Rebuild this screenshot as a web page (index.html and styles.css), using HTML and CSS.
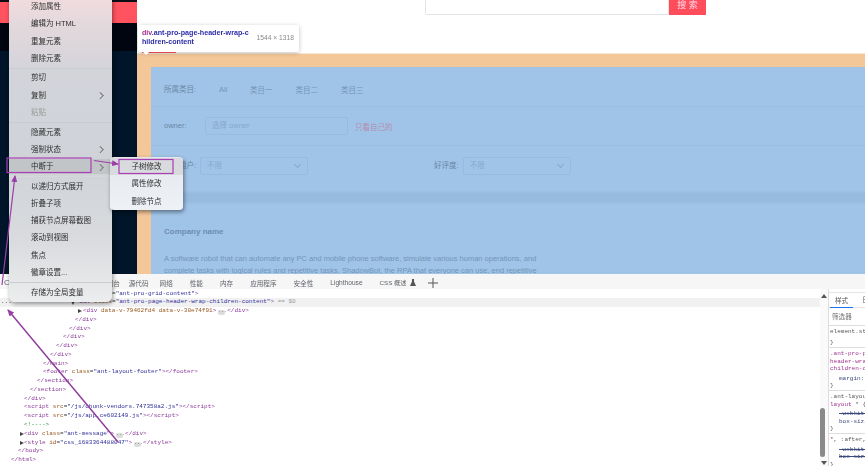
FILE: index.html
```html
<!DOCTYPE html>
<html lang="zh-CN">
<head>
    <meta charset="UTF-8">
    <meta name="viewport" content="width=device-width, initial-scale=1.0">
    <title>DevTools</title>
    <link rel="stylesheet" href="styles.css">
</head>
<body>

<div class="page">
    <aside class="sidebar">
        <div class="side-top"></div>
        <div class="side-red"></div>
        <div class="side-black"></div>
    </aside>

    <main class="content">
        <div class="topbar">
            <div class="search-input"></div>
            <div class="search-btn">搜 索</div>
        </div>
        <div class="margin-top"></div>
        <div class="margin-row">
            <div class="margin-left"></div>
            <div class="blue">
                <div class="filter-row row-cat">
                    <span class="flabel">所属类目:</span>
                    <span class="cat cat-all">All</span>
                    <span class="cat">类目一</span>
                    <span class="cat">类目二</span>
                    <span class="cat">类目三</span>
                </div>
                <div class="filter-row row-owner">
                    <span class="flabel">owner:</span>
                    <div class="finput">选择 owner</div>
                    <span class="only-me">只看自己的</span>
                </div>
                <div class="filter-row row-select">
                    <span class="flabel lab-user">活跃用户:</span>
                    <div class="fselect">不限<span class="chev"></span></div>
                    <span class="flabel lab-good">好评度:</span>
                    <div class="fselect">不限<span class="chev"></span></div>
                </div>
                <div class="band"></div>
                <h3 class="company">Company name</h3>
                <p class="about">A software robot that can automate any PC and mobile phone software, simulate various human operations, and complete tasks with logical rules and repetitive tasks. ShadowBot, the RPA that everyone can use, end repetitive</p>
            </div>
        </div>
    </main>
</div>

<section class="devtools">
    <div class="tabs">
        <span class="tab-first">C</span>
        <span class="tab tab-console">控制台</span>
        <span class="tab tab-src">源代码</span>
        <span class="tab">网络</span>
        <span class="tab">性能</span>
        <span class="tab">内存</span>
        <span class="tab">应用程序</span>
        <span class="tab">安全性</span>
        <span class="tab">Lighthouse</span>
        <span class="tab tab-css">CSS 概述 <svg class="flask" width="6" height="7" viewBox="0 0 6 7"><path d="M2 0h2v2.5L6 7H0l2-4.5z" fill="#555"/></svg></span>
        <svg class="tab-plus" width="10" height="10" viewBox="0 0 10 10"><path d="M5 0v10M0 5h10" stroke="#555" stroke-width="1" fill="none"/></svg>
    </div>
    <div class="dt-body">
        <div class="tree">
            <div class="ln l15"><span class="tg">&lt;div</span> <span class="at">class</span>=<span class="vl">"ant-pro-grid-content"</span><span class="tg">&gt;</span></div>
            <div class="ln l15 selected"><span class="dots">...</span><span class="tri-down"></span><span class="tg">&lt;div</span> <span class="at">class</span>=<span class="vl">"ant-pro-page-header-wrap-children-content"</span><span class="tg">&gt;</span> <span class="eq">== $0</span></div>
            <div class="ln l10"><span class="tri"></span><span class="tg">&lt;div</span> <span class="at">data-v-79462fd4 data-v-30e74f91</span><span class="tg">&gt;</span><span class="more">...</span><span class="tg">&lt;/div&gt;</span></div>
            <div class="ln l10 tg">&lt;/div&gt;</div>
            <div class="ln l9 tg">&lt;/div&gt;</div>
            <div class="ln l8 tg">&lt;/div&gt;</div>
            <div class="ln l7 tg">&lt;/div&gt;</div>
            <div class="ln l6 tg">&lt;/div&gt;</div>
            <div class="ln l5 tg">&lt;/main&gt;</div>
            <div class="ln l5"><span class="tg">&lt;footer</span> <span class="at">class</span>=<span class="vl">"ant-layout-footer"</span><span class="tg">&gt;&lt;/footer&gt;</span></div>
            <div class="ln l4 tg">&lt;/section&gt;</div>
            <div class="ln l3 tg">&lt;/section&gt;</div>
            <div class="ln l2 tg">&lt;/div&gt;</div>
            <div class="ln l2"><span class="tg">&lt;script</span> <span class="at">src</span>=<span class="vl">"/js/chunk-vendors.747358a2.js"</span><span class="tg">&gt;&lt;/script&gt;</span></div>
            <div class="ln l2"><span class="tg">&lt;script</span> <span class="at">src</span>=<span class="vl">"/js/app.ce602149.js"</span><span class="tg">&gt;&lt;/script&gt;</span></div>
            <div class="ln l2 cm">&lt;!----&gt;</div>
            <div class="ln l2"><span class="tri"></span><span class="tg">&lt;div</span> <span class="at">class</span>=<span class="vl">"ant-message"</span><span class="tg">&gt;</span><span class="more">...</span><span class="tg">&lt;/div&gt;</span></div>
            <div class="ln l2"><span class="tri"></span><span class="tg">&lt;style</span> <span class="at">id</span>=<span class="vl">"css_1683364488047"</span><span class="tg">&gt;</span><span class="more">...</span><span class="tg">&lt;/style&gt;</span></div>
            <div class="ln l1 tg">&lt;/body&gt;</div>
            <div class="ln l0 tg">&lt;/html&gt;</div>
        </div>
        <div class="scroll">
            <span class="sc-up"></span>
            <span class="sc-thumb"></span>
            <span class="sc-down"></span>
        </div>
        <div class="styles">
            <div class="st-tabs"><span class="st-active">样式</span><span class="st-next">日</span></div>
            <div class="st-filter">筛选器</div>
            <div class="rule"><div>element.style {</div><div class="end-gap">}</div></div>
            <div class="rule"><div class="sel">.ant-pro-page-</div><div class="sel">header-wrap-</div><div class="sel">children-content {</div><div class="prop first">margin: 0;</div><div>}</div></div>
            <div class="rule"><div>.ant-layout-</div><div><span class="sel">layout</span> * {</div><div class="prop first strike">-webkit-box</div><div class="prop">box-sizing:</div><div>}</div></div>
            <div class="rule"><div><span class="sel">*</span>, :after, :be</div><div class="prop first strike">-webkit-box</div><div class="prop strike">box-sizing:</div><div>}</div></div>
        </div>
    </div>
</section>

<!-- floating stuff on top of the page -->
<div class="tooltip">
    <div class="tip-name"><span class="tip-tag">div</span>.ant-pro-page-header-wrap-c<br>hildren-content</div>
    <div class="tip-size">1544 × 1318</div>
</div>

<div class="menu">
    <div class="mi">添加属性</div>
    <div class="mi">编辑为 HTML</div>
    <div class="mi">重复元素</div>
    <div class="mi">删除元素</div>
    <div class="sep"></div>
    <div class="mi">剪切</div>
    <div class="mi has-sub">复制</div>
    <div class="mi off">粘贴</div>
    <div class="sep"></div>
    <div class="mi">隐藏元素</div>
    <div class="mi has-sub">强制状态</div>
    <div class="mi has-sub hover">中断于</div>
    <div class="sep sep-faint"></div>
    <div class="mi">以递归方式展开</div>
    <div class="mi">折叠子项</div>
    <div class="mi">捕获节点屏幕截图</div>
    <div class="mi">滚动到视图</div>
    <div class="mi">焦点</div>
    <div class="mi">徽章设置...</div>
    <div class="sep"></div>
    <div class="mi">存储为全局变量</div>
</div>

<div class="submenu">
    <div class="si hover">子树修改</div>
    <div class="si">属性修改</div>
    <div class="si">删除节点</div>
</div>

<svg class="marks" width="865" height="466" viewBox="0 0 865 466">
    <defs>
        <marker id="head" markerWidth="7" markerHeight="6" refX="6" refY="3" orient="auto" markerUnits="userSpaceOnUse">
            <path d="M0 0L7 3L0 6z" fill="#9a3fa6"/>
        </marker>
    </defs>
    <rect x="7" y="158" width="84" height="14.5" fill="none" stroke="#a83fb5" stroke-width="1.2"/>
    <rect x="119" y="159.5" width="54" height="14" fill="none" stroke="#a83fb5" stroke-width="1.2"/>
    <line x1="94" y1="160.5" x2="118" y2="164" stroke="#9a3fa6" stroke-width="1.2" marker-end="url(#head)"/>
    <line x1="2" y1="285" x2="15" y2="176" stroke="#9a3fa6" stroke-width="1.2" marker-end="url(#head)"/>
    <line x1="118" y1="442" x2="8" y2="310" stroke="#8d3a9c" stroke-width="1.4" marker-end="url(#head)"/>
</svg>

</body>
</html>
```

FILE: styles.css
```css
/* General */
html, body {
    margin: 0;
    padding: 0;
}
body {
    width: 865px;
    height: 466px;
    overflow: hidden;
    position: relative;
    background: #fff;
    font-family: "Liberation Sans", "Noto Sans CJK SC", sans-serif;
    color: #333;
    filter: blur(0.45px);
}

/* Page under inspection */
.page {
    display: flex;
    height: 274px;
}
.sidebar {
    width: 137px;
    background: #001529;
    flex-shrink: 0;
}
.side-top {
    height: 2px;
    background: #0a0d14;
}
.side-red {
    height: 21px;
    background: #ff535f;
}
.side-black {
    height: 28px;
    background: #00050f;
}
.content {
    flex: 1;
    display: flex;
    flex-direction: column;
    min-width: 0;
}
.topbar {
    height: 53px;
    display: flex;
    align-items: flex-start;
    padding-left: 288px;
    border-bottom: 1px solid #f7e6d4;
    position: relative;
}
/* active tab ink, mostly hidden by the tooltip */
.topbar::before {
    content: "";
    position: absolute;
    left: 5px;
    bottom: 0;
    width: 34px;
    height: 1.5px;
    background: #ff535f;
}
.search-input {
    width: 242px;
    height: 14px;
    background: #fff;
    border: 1px solid #e4e4e4;
    border-top: none;
    border-radius: 0 0 2px 2px;
}
.search-btn {
    width: 37px;
    height: 15px;
    background: #ff4d5b;
    color: #fde;
    font-size: 9px;
    line-height: 10px;
    text-align: center;
}
.margin-top {
    height: 13px;
    background: #f4c799;
}
.margin-row {
    flex: 1;
    display: flex;
    min-height: 0;
}
.margin-left {
    width: 14px;
    background: #f4c799;
}
.blue {
    flex: 1;
    background: #a0c4e8;
    overflow: hidden;
    color: #6d8fb0;
    font-size: 7.5px;
}
.filter-row {
    display: flex;
    align-items: center;
    padding-left: 13px;
    border-bottom: 1px dotted #94b8dc;
}
.row-cat {
    height: 39px;
}
.row-owner {
    height: 38px;
}
.row-select {
    height: 38px;
    border-bottom: none;
    padding-top: 1px;
}
.flabel {
    color: #6a87a6;
}
.row-cat .flabel {
    width: 55px;
    margin-top: 3px;
}
.row-owner .flabel {
    width: 41px;
    margin-top: -1px;
}
.cat {
    margin-right: 23px;
    margin-top: 6px;
    color: #7494b4;
}
.cat-all {
    width: 8px;
    white-space: nowrap;
}
.finput, .fselect {
    height: 16px;
    line-height: 16px;
    border: 1px solid #97bbdf;
    border-radius: 2px;
    box-sizing: content-box;
    padding-left: 6px;
    color: #86a8ca;
    position: relative;
}
.finput {
    width: 135px;
}
.only-me {
    margin-left: 7px;
    color: #b48cb0;
}
.lab-user {
    margin-right: 4px;
    margin-top: -4px;
    white-space: nowrap;
}
.lab-good {
    margin-left: 126px;
    margin-right: 4px;
    margin-top: -4px;
}
.fselect {
    width: 100px;
}
.chev {
    position: absolute;
    right: 7px;
    top: 4px;
    width: 4px;
    height: 4px;
    border-right: 1px solid #86a8ca;
    border-bottom: 1px solid #86a8ca;
    transform: rotate(45deg);
}
.band {
    height: 15px;
    margin-top: 5px;
    background: linear-gradient(180deg, #a0c4e8 0%, #96bbdf 25%, #96bbdf 75%, #a0c4e8 100%);
}
.company {
    margin: 21px 0 0 13px;
    font-size: 8px;
    line-height: 12px;
    font-weight: bold;
    color: #6d8db0;
}
.about {
    margin: 15px 0 0 13px;
    width: 378px;
    font-size: 7.5px;
    line-height: 12px;
    color: #7394b6;
}

/* DevTools */
.devtools {
    height: 192px;
    background: #fff;
}
.tabs {
    height: 14.5px;
    padding-top: 3px;
    display: flex;
    align-items: center;
    background: #f6f6f7;
    box-sizing: border-box;
    font-size: 6.6px;
    color: #5f6368;
}
.tab-first {
    width: 100px;
    padding-left: 4px;
    box-sizing: border-box;
    font-size: 8px;
}
.tab {
    margin-right: 17px;
    white-space: nowrap;
}
.tab-console {
    margin-right: 9px;
}
.tab-src {
    margin-right: 11px;
}
.tab-css {
    margin-right: 0;
    font-size: 6.2px;
}
.flask {
    margin-left: 2px;
    vertical-align: -1px;
}
.tab-plus {
    margin-left: 12px;
}
.dt-body {
    display: flex;
    height: 177.5px;
}
.tree {
    width: 820px;
    padding-top: 1px;
    font-family: "Liberation Mono", "DejaVu Sans Mono", monospace;
    font-size: 6px;
    overflow: hidden;
}
.ln {
    height: 8.78px;
    line-height: 8.78px;
    white-space: nowrap;
    position: relative;
}
.l0 { padding-left: 11px; }
.l1 { padding-left: 18px; }
.l2 { padding-left: 24px; }
.l3 { padding-left: 30px; }
.l4 { padding-left: 37px; }
.l5 { padding-left: 43px; }
.l6 { padding-left: 50px; }
.l7 { padding-left: 56px; }
.l8 { padding-left: 63px; }
.l9 { padding-left: 69px; }
.l10 { padding-left: 75px; }
.l15 { padding-left: 76px; }
.l10 .tri { left: 78px; }
.l10:has(.tri) { padding-left: 83px; }
.selected {
    background: #f1f1f1;
}
.tg { color: #8a3a9a; }
.at { color: #9a5a20; }
.vl { color: #2f2f9a; }
.eq { color: #999; }
.cm { color: #2f8f3f; }
.dots {
    position: absolute;
    left: 1px;
    top: 0;
    color: #444;
    font-weight: bold;
}
.tri, .tri-down {
    position: absolute;
    left: 20px;
    top: 2px;
    width: 0;
    height: 0;
}
.tri {
    border-left: 4px solid #444;
    border-top: 2.5px solid transparent;
    border-bottom: 2.5px solid transparent;
}
.tri-down {
    left: 71px;
    top: 3px;
    border-top: 4px solid #444;
    border-left: 2.5px solid transparent;
    border-right: 2.5px solid transparent;
}
.more {
    display: inline-block;
    width: 7px;
    height: 5px;
    line-height: 3px;
    margin: 0 2px;
    background: #dcdcdc;
    border-radius: 2px;
    font-size: 5px;
    text-align: center;
    color: #666;
}
.scroll {
    width: 8px;
    flex-shrink: 0;
    background: #fafafa;
    position: relative;
    box-sizing: border-box;
}
.sc-up, .sc-down {
    position: absolute;
    left: 1px;
    width: 0;
    height: 0;
    border-left: 3px solid transparent;
    border-right: 3px solid transparent;
}
.sc-up {
    top: 5px;
    border-bottom: 4px solid #555;
}
.sc-down {
    bottom: 1px;
    border-top: 4px solid #555;
}
.sc-thumb {
    position: absolute;
    left: 0;
    top: 119px;
    width: 5px;
    height: 49px;
    border-radius: 3px;
    background: #8a8a8a;
}
.styles {
    flex: 1;
    min-width: 0;
    overflow: hidden;
    padding-top: 3.5px;
    border-left: 1px solid #ddd;
    font-family: "Liberation Mono", "DejaVu Sans Mono", monospace;
    font-size: 6px;
    line-height: 7.5px;
    color: #555;
    white-space: nowrap;
}
.st-tabs {
    height: 16px;
    display: flex;
    gap: 9px;
    padding-left: 1px;
    align-items: center;
    font-family: "Liberation Sans", "Noto Sans CJK SC", sans-serif;
    font-size: 6.6px;
    border-top: 1px solid #e4e4e4;
    border-bottom: 1px solid #e4e4e4;
    box-sizing: border-box;
}
.st-active {
    height: 15px;
    line-height: 15px;
    padding: 0 5px;
    border-bottom: 1px solid #1a73e8;
    box-sizing: border-box;
}
.st-filter {
    height: 18px;
    line-height: 17px;
    padding-left: 3px;
    font-family: "Liberation Sans", "Noto Sans CJK SC", sans-serif;
    font-size: 6.6px;
    color: #777;
    border-bottom: 1px solid #ddd;
    box-sizing: border-box;
}
.rule {
    padding: 2px 0 0.5px 1px;
    border-bottom: 1px solid #ddd;
}
.end-gap {
    margin-top: 3.5px;
}
.sel { color: #a0308c; }
.prop {
    padding-left: 9px;
    color: #3a4a7a;
}
.prop.first {
    margin-top: 2px;
}
.strike {
    text-decoration: line-through;
}

/* Inspector tooltip */
.tooltip {
    position: absolute;
    left: 138px;
    top: 25px;
    width: 161px;
    height: 27px;
    box-sizing: border-box;
    padding: 4px 5px 0 4px;
    display: flex;
    justify-content: space-between;
    background: #fff;
    border-radius: 2px;
    box-shadow: 0 1px 4px rgba(0, 0, 0, 0.25);
    font-size: 7.15px;
    line-height: 9px;
    font-weight: bold;
    color: #2c2ca8;
}
.tooltip::after {
    content: "";
    position: absolute;
    left: 5px;
    bottom: -3px;
    border-left: 3px solid transparent;
    border-right: 3px solid transparent;
    border-top: 3px solid #fff;
}
.tip-name {
    white-space: nowrap;
}
.tip-tag { color: #a0308c; }
.tip-size {
    font-weight: normal;
    color: #888;
    font-size: 6.7px;
    line-height: 18px;
    white-space: nowrap;
}

/* Context menu */
.menu {
    position: absolute;
    left: 9px;
    top: -3px;
    width: 103px;
    height: 305px;
    box-sizing: border-box;
    padding-top: 1px;
    background: linear-gradient(180deg, #f1dcdf 0%, #e2d8dc 10%, #d2d4da 25%, #cfd3d8 55%, #d9dbde 80%, #ecedee 100%);
    border-radius: 0 0 6px 6px;
    box-shadow: 1px 2px 4px rgba(0, 0, 0, 0.4);
    font-size: 7.5px;
    color: #2e2e2e;
}
.mi {
    height: 17.25px;
    line-height: 17.25px;
    padding-left: 22px;
    position: relative;
    white-space: nowrap;
}
.mi.off {
    color: #999;
}
.mi.hover {
    background: linear-gradient(180deg, transparent 1px, #c2c5c8 1px, #c2c5c8 16px, transparent 16px);
}
.has-sub::after {
    content: "";
    position: absolute;
    right: 10px;
    top: 6.5px;
    width: 3.5px;
    height: 3.5px;
    border-top: 0.8px solid #777;
    border-right: 0.8px solid #777;
    transform: rotate(45deg);
}
.sep {
    height: 1px;
    margin: 0.7px 0;
    background: #c9ccd0;
}
.sep-faint {
    background: #d5d7da;
}

/* Sub menu */
.submenu {
    position: absolute;
    left: 110px;
    top: 157px;
    width: 73px;
    height: 53px;
    box-sizing: border-box;
    padding-top: 1px;
    background: linear-gradient(180deg, #e4e7ec 0%, #eef1f6 100%);
    border-radius: 4px;
    box-shadow: 1px 2px 4px rgba(0, 0, 0, 0.45);
    font-size: 7.5px;
    color: #2e2e2e;
    text-align: center;
}
.si {
    height: 17.25px;
    line-height: 17.25px;
}
.si.hover {
    background: #d8dade;
}

.marks {
    position: absolute;
    left: 0;
    top: 0;
    pointer-events: none;
}
```
